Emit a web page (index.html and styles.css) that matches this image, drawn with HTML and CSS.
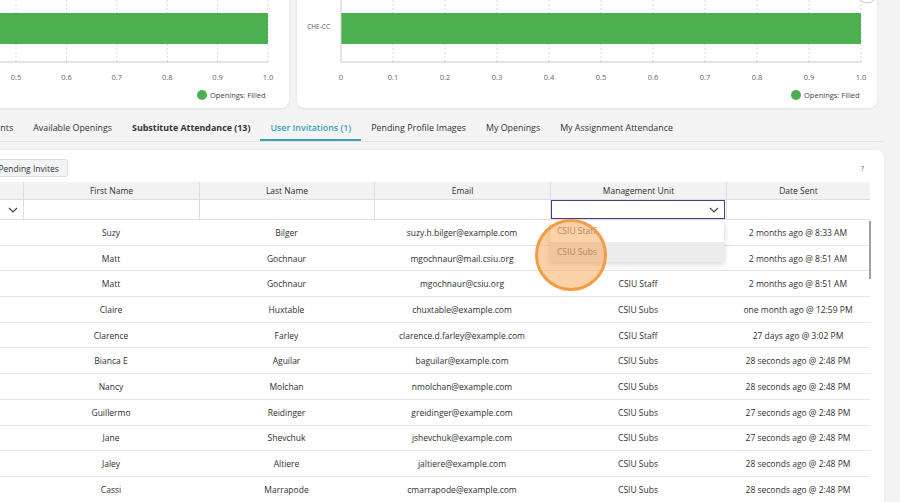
FILE: index.html
```html
<!DOCTYPE html>
<html lang="en">
<head>
    <meta charset="UTF-8">
    <meta name="viewport" content="width=device-width, initial-scale=1.0">
    <title>User Invitations</title>
    <link rel="stylesheet" href="styles.css">
</head>
<body>
    <div class="charts">
        <div class="card card-left">
            <svg width="560" height="128" viewBox="0 0 560 128">
                <g class="gridlines">
                    <line x1="35" y1="0" x2="35" y2="82"/><line x1="85.4" y1="0" x2="85.4" y2="82"/>
                    <line x1="135.8" y1="0" x2="135.8" y2="82"/><line x1="186.2" y1="0" x2="186.2" y2="82"/>
                    <line x1="236.6" y1="0" x2="236.6" y2="82"/><line x1="287" y1="0" x2="287" y2="82"/>
                    <line x1="337.4" y1="0" x2="337.4" y2="82"/><line x1="387.8" y1="0" x2="387.8" y2="82"/>
                    <line x1="438.2" y1="0" x2="438.2" y2="82"/><line x1="488.6" y1="0" x2="488.6" y2="82"/>
                    <line x1="539" y1="0" x2="539" y2="82"/>
                </g>
                <rect class="bar" x="35" y="33" width="504" height="31" rx="1"/>
                <line class="axis" x1="35" y1="82" x2="539" y2="82"/>
                <g class="ticks">
                    <text x="287" y="100">0.5</text><text x="337.4" y="100">0.6</text><text x="387.8" y="100">0.7</text>
                    <text x="438.2" y="100">0.8</text><text x="488.6" y="100">0.9</text><text x="539" y="100">1.0</text>
                </g>
                <circle class="dot" cx="473" cy="115" r="5"/>
                <text class="legend" x="481" y="118">Openings: Filled</text>
            </svg>
        </div>
        <div class="card card-right">
            <svg width="580" height="128" viewBox="0 0 580 128">
                <g class="gridlines">
                    <line x1="96" y1="0" x2="96" y2="82"/><line x1="148" y1="0" x2="148" y2="82"/>
                    <line x1="200" y1="0" x2="200" y2="82"/><line x1="252" y1="0" x2="252" y2="82"/>
                    <line x1="304" y1="0" x2="304" y2="82"/><line x1="356" y1="0" x2="356" y2="82"/>
                    <line x1="408" y1="0" x2="408" y2="82"/><line x1="460" y1="0" x2="460" y2="82"/>
                    <line x1="512" y1="0" x2="512" y2="82"/><line x1="564" y1="0" x2="564" y2="82"/>
                </g>
                <rect class="bar" x="44" y="33" width="520" height="31" rx="1"/>
                <line class="axis" x1="44" y1="0" x2="44" y2="82"/>
                <line class="axis" x1="44" y1="82" x2="564" y2="82"/>
                <text class="cat" x="33" y="49">CHE-CC</text>
                <g class="ticks">
                    <text x="44" y="100">0</text><text x="96" y="100">0.1</text><text x="148" y="100">0.2</text>
                    <text x="200" y="100">0.3</text><text x="252" y="100">0.4</text><text x="304" y="100">0.5</text>
                    <text x="356" y="100">0.6</text><text x="408" y="100">0.7</text><text x="460" y="100">0.8</text>
                    <text x="512" y="100">0.9</text><text x="564" y="100">1.0</text>
                </g>
                <circle class="dot" cx="499" cy="115" r="5"/>
                <text class="legend" x="507" y="118">Openings: Filled</text>
                <circle class="corner-btn" cx="570" cy="13" r="10"/>
            </svg>
        </div>
    </div>

    <nav class="tabs">
        <span class="tab tab-cut">Events</span>
        <span class="tab">Available Openings</span>
        <span class="tab strong">Substitute Attendance (13)</span>
        <span class="tab active">User Invitations (1)</span>
        <span class="tab">Pending Profile Images</span>
        <span class="tab">My Openings</span>
        <span class="tab">My Assignment Attendance</span>
    </nav>

    <section class="panel">
        <div class="toolbar">
            <button class="btn">Resend Pending Invites</button>
            <span class="help">?</span>
        </div>

        <div class="grid">
            <div class="row head">
                <div class="cell"></div>
                <div class="cell">First Name</div>
                <div class="cell">Last Name</div>
                <div class="cell">Email</div>
                <div class="cell">Management Unit</div>
                <div class="cell">Date Sent</div>
            </div>
            <div class="row filter">
                <div class="cell select-cell">
                    <svg class="chev" width="10" height="6" viewBox="0 0 10 6"><polyline points="1,1 5,5 9,1"/></svg>
                </div>
                <div class="cell"></div>
                <div class="cell"></div>
                <div class="cell"></div>
                <div class="cell">
                    <div class="focus-select">
                        <svg class="chev" width="10" height="6" viewBox="0 0 10 6"><polyline points="1,1 5,5 9,1"/></svg>
                    </div>
                </div>
                <div class="cell"></div>
            </div>

            <div class="rows">
                <div class="row"><div class="cell"></div><div class="cell">Suzy</div><div class="cell">Bilger</div><div class="cell">suzy.h.bilger@example.com</div><div class="cell">CSIU Staff</div><div class="cell">2 months ago @ 8:33 AM</div></div>
                <div class="row"><div class="cell"></div><div class="cell">Matt</div><div class="cell">Gochnaur</div><div class="cell">mgochnaur@mail.csiu.org</div><div class="cell">CSIU Staff</div><div class="cell">2 months ago @ 8:51 AM</div></div>
                <div class="row"><div class="cell"></div><div class="cell">Matt</div><div class="cell">Gochnaur</div><div class="cell">mgochnaur@csiu.org</div><div class="cell">CSIU Staff</div><div class="cell">2 months ago @ 8:51 AM</div></div>
                <div class="row"><div class="cell"></div><div class="cell">Claire</div><div class="cell">Huxtable</div><div class="cell">chuxtable@example.com</div><div class="cell">CSIU Subs</div><div class="cell">one month ago @ 12:59 PM</div></div>
                <div class="row"><div class="cell"></div><div class="cell">Clarence</div><div class="cell">Farley</div><div class="cell">clarence.d.farley@example.com</div><div class="cell">CSIU Staff</div><div class="cell">27 days ago @ 3:02 PM</div></div>
                <div class="row"><div class="cell"></div><div class="cell">Bianca E</div><div class="cell">Aguilar</div><div class="cell">baguilar@example.com</div><div class="cell">CSIU Subs</div><div class="cell">28 seconds ago @ 2:48 PM</div></div>
                <div class="row"><div class="cell"></div><div class="cell">Nancy</div><div class="cell">Molchan</div><div class="cell">nmolchan@example.com</div><div class="cell">CSIU Subs</div><div class="cell">28 seconds ago @ 2:48 PM</div></div>
                <div class="row"><div class="cell"></div><div class="cell">Guillermo</div><div class="cell">Reidinger</div><div class="cell">greidinger@example.com</div><div class="cell">CSIU Subs</div><div class="cell">27 seconds ago @ 2:48 PM</div></div>
                <div class="row"><div class="cell"></div><div class="cell">Jane</div><div class="cell">Shevchuk</div><div class="cell">jshevchuk@example.com</div><div class="cell">CSIU Subs</div><div class="cell">27 seconds ago @ 2:48 PM</div></div>
                <div class="row"><div class="cell"></div><div class="cell">Jaley</div><div class="cell">Altiere</div><div class="cell">jaltiere@example.com</div><div class="cell">CSIU Subs</div><div class="cell">28 seconds ago @ 2:48 PM</div></div>
                <div class="row"><div class="cell"></div><div class="cell">Cassi</div><div class="cell">Marrapode</div><div class="cell">cmarrapode@example.com</div><div class="cell">CSIU Subs</div><div class="cell">28 seconds ago @ 2:48 PM</div></div>

                <ul class="dropdown">
                    <li>CSIU Staff</li>
                    <li class="hover">CSIU Subs</li>
                </ul>
                <div class="click-mark"></div>
                <div class="scrollbar"></div>
            </div>
        </div>
    </section>
</body>
</html>
```

FILE: styles.css
```css
* {
    margin: 0;
    padding: 0;
    box-sizing: border-box;
}
body {
    width: 900px;
    height: 502px;
    overflow: hidden;
    font-family: 'Open Sans', 'Noto Sans', sans-serif;
    font-size: 8.5px;
    color: #2f2f2f;
    background-color: #f4f4f4;
}

/* charts */
.charts {
    display: flex;
    gap: 8px;
    margin-left: -271px;
    margin-top: -20px;
}
.card {
    height: 128px;
    background-color: #fff;
    border-radius: 8px;
    box-shadow: 0 1px 3px rgba(0, 0, 0, 0.08);
}
.card-left { width: 560px; }
.card-right { width: 580px; }
.card svg { display: block; }
.gridlines line {
    stroke: #d9d9d9;
    stroke-width: 1;
    stroke-dasharray: 2 2;
}
.bar { fill: #4caf50; }
.axis { stroke: #c8c8c8; stroke-width: 1; }
.ticks text {
    font-size: 7.5px;
    fill: #666;
    text-anchor: middle;
}
.cat {
    font-size: 6.5px;
    fill: #555;
    text-anchor: end;
}
.dot { fill: #4caf50; }
.legend {
    font-size: 7.5px;
    fill: #444;
}
.corner-btn {
    fill: #fff;
    stroke: #c8c8c8;
    stroke-width: 1;
}

/* tabs */
.tabs {
    display: flex;
    width: 908px;
    height: 27px;
    margin-top: 7px;
    margin-left: -24px;
    border-bottom: 1px solid #e4e4e4;
}
.tab {
    padding: 0 10px;
    line-height: 26px;
    font-size: 8.9px;
    color: #333;
    white-space: nowrap;
}
.tab.strong { font-weight: 700; }
.tab.active {
    color: #3a9fb8;
    font-weight: 600;
    border-bottom: 2px solid #3a9fb8;
}

/* panel */
.panel {
    width: 944px;
    height: 360px;
    margin-top: 8px;
    margin-left: -60px;
    padding: 9px 14px 0 20px;
    background-color: #fff;
    border-radius: 0 8px 0 0;
    box-shadow: 0 1px 4px rgba(0, 0, 0, 0.08);
}
.toolbar {
    display: flex;
    justify-content: space-between;
    align-items: center;
    height: 18px;
    margin-bottom: 5px;
}
.btn {
    height: 18px;
    padding: 0 8px;
    margin-left: -2px;
    font-family: inherit;
    font-size: 8.5px;
    color: #333;
    background-color: #f3f4f5;
    border: 1px solid #dcdfe2;
    border-radius: 3px;
}
.help {
    font-size: 7px;
    color: #555;
    margin-right: 6px;
}

/* grid */
.grid { width: 910px; }
.row {
    display: grid;
    grid-template-columns: 63px 176px 175px 176px 176px 144px;
    height: 25.7px;
    align-items: center;
    text-align: center;
    border-bottom: 1px solid #e6e6e6;
}
.row .cell { white-space: nowrap; }
.row.head {
    height: 18px;
    background-color: #f2f2f2;
    border-bottom: 1px solid #dedede;
}
.row.head .cell,
.row.filter .cell {
    height: 100%;
    line-height: 17px;
    border-left: 1px solid #dedede;
}
.row.head .cell:first-child,
.row.filter .cell:first-child { border-left: none; }
.row.filter {
    height: 20px;
    border-bottom: 1px solid #e0e0e0;
}
.row.filter .cell { line-height: 19px; }
.select-cell {
    display: flex;
    align-items: center;
    justify-content: flex-end;
    padding-right: 5px;
}
.chev {
    fill: none;
    stroke: #444;
    stroke-width: 1.2;
}
.focus-select {
    display: flex;
    align-items: center;
    justify-content: flex-end;
    height: 19px;
    margin: 0 1px 0 0;
    padding-right: 5px;
    border: 1.5px solid #4f3a7e;
}

.rows { position: relative; }

.dropdown {
    position: absolute;
    top: 1px;
    left: 590px;
    width: 174px;
    list-style: none;
    background-color: #fff;
    box-shadow: 0 2px 6px rgba(0, 0, 0, 0.18);
    text-align: left;
}
.dropdown li {
    height: 20.5px;
    line-height: 20px;
    padding-left: 7px;
    color: #777;
}
.dropdown li.hover { background-color: #ececec; }

.click-mark {
    position: absolute;
    top: -1px;
    left: 575px;
    width: 72px;
    height: 72px;
    border-radius: 50%;
    border: 3px solid #f39b45;
    background-color: rgba(246, 152, 62, 0.45);
}

.scrollbar {
    position: absolute;
    top: 1px;
    left: 909px;
    width: 2px;
    height: 58px;
    background-color: #a0a0a0;
}
```
